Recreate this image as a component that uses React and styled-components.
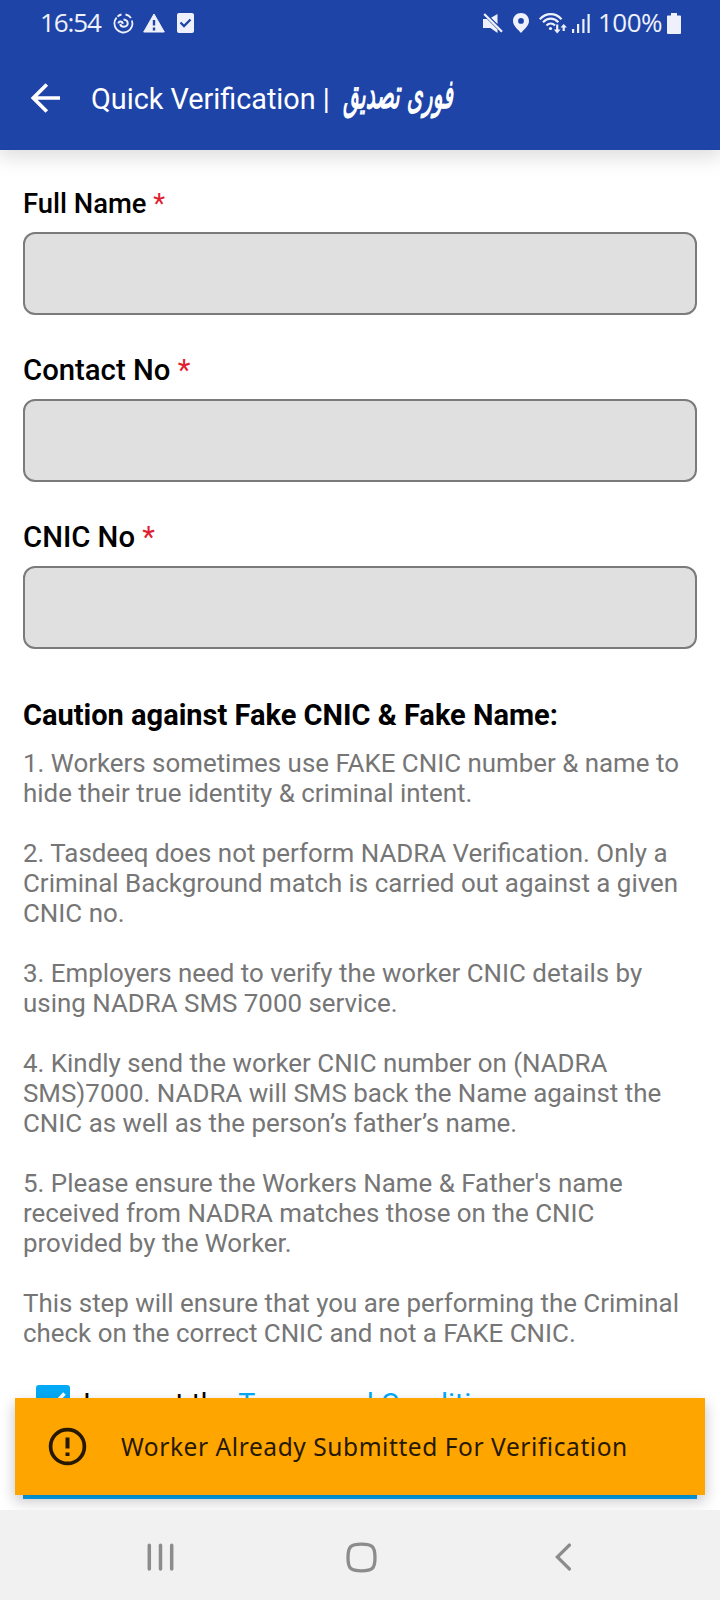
import React from "react";
import styled, { createGlobalStyle } from "styled-components";

const GlobalStyle = createGlobalStyle`
  *, *::before, *::after { box-sizing: border-box; }
  html, body { margin: 0; padding: 0; background: #fff; }
  body { font-family: Roboto, sans-serif; color: #000; }
`;

const Screen = styled.div`
  position: relative;
  width: 720px;
  height: 1600px;
  display: flex;
  flex-direction: column;
  overflow: hidden;
  background: #fff;
`;

const Header = styled.header`
  flex: none;
  height: 150px;
  background: #1e44a8;
  color: #fff;
  z-index: 1;
  box-shadow: 0 4px 20px 2px rgba(0, 0, 0, 0.15);
`;

const StatusBar = styled.div`
  display: flex;
  align-items: center;
  height: 46px;
  padding: 0 39px 0 40px;
  color: #eef1fb;
`;

const Clock = styled.span`
  font: 400 26px/46px "Open Sans", sans-serif;
  width: 73px;
  margin-top: -2px;
  letter-spacing: -1.1px;
  white-space: nowrap;
`;

const Percent = styled.span`
  font: 400 26px/46px "Open Sans", sans-serif;
  width: 69px;
  margin: -2px 0 0 8px;
  letter-spacing: -0.5px;
  white-space: nowrap;
`;

const Glyph = styled.svg`
  display: block;
  flex: none;
  margin-left: ${(p) => p.$gap || 0}px;
`;

const Spacer = styled.div`
  flex: 1;
`;

const TitleBar = styled.div`
  display: flex;
  align-items: center;
  height: 104px;
  padding-left: 29px;
`;

const Title = styled.h1`
  display: flex;
  margin: 1px 0 0 31px;
  font-size: 28.8px;
  line-height: 34px;
  font-weight: 400;
  white-space: pre;
`;

const Urdu = styled.span`
  display: inline-block;
  font: italic 700 ${(p) => p.$size}px/34px "DejaVu Sans", sans-serif;
  transform-origin: ${(p) => p.$origin} center;
  transform: scale(0.6, ${(p) => p.$rise || 1});
  white-space: nowrap;
`;

const UrduTitle = styled(Urdu)`
  margin: -5px 0 0 13px;
`;

const Content = styled.main`
  flex: none;
  height: 1349px;
  padding: 37px 23px 0;
  overflow: hidden;
`;

const Field = styled.div`
  height: 167px;
`;

const Label = styled.label`
  display: block;
  height: 45px;
  font-size: ${(p) => p.$size}px;
  line-height: ${(p) => p.$leading}px;
  font-weight: 500;
`;

const Required = styled.span`
  color: #e0202e;
  font-weight: 400;
`;

const Input = styled.input`
  display: block;
  width: 100%;
  height: 83px;
  border: 2px solid #7b7b7b;
  border-radius: 12px;
  background: #e0e0e0;
  outline: none;
`;

const CautionTitle = styled.h2`
  margin: 10px 0 0;
  font-size: 29px;
  line-height: 34px;
  font-weight: 700;
  white-space: nowrap;
`;

const Notes = styled.div`
  margin-top: 16px;
  color: #767676;
  font-size: 25.9px;
  line-height: 30px;
  white-space: nowrap;
`;

const Note = styled.p`
  margin: 0 0 30px;
`;

const Consent = styled.div`
  display: flex;
  align-items: flex-start;
  margin-top: 37px;
  padding-left: 13px;
  height: 80px;
`;

const ConsentText = styled.span`
  margin: 3px 0 0 13px;
  font-size: 28.7px;
  line-height: 33px;
  white-space: pre;
`;

const Link = styled.a`
  color: #03a9f4;
`;

const Submit = styled.button`
  display: flex;
  align-items: flex-start;
  justify-content: flex-end;
  width: 100%;
  height: 84px;
  border: 0;
  padding: 28px 41px 0;
  background: #03a9f4;
  color: #fff;
`;

const Toast = styled.div`
  position: absolute;
  left: 15px;
  top: 1398px;
  width: 690px;
  height: 97px;
  z-index: 2;
  display: flex;
  align-items: center;
  padding-left: 31px;
  background: #ffa500;
  color: #261900;
  box-shadow: 0 6px 14px rgba(0, 0, 0, 0.24);
`;

const ToastText = styled.span`
  margin: 0 0 0 33px;
  font: 400 24.5px/34px "Noto Sans", sans-serif;
  letter-spacing: 0.57px;
  white-space: nowrap;
`;

const NavBar = styled.nav`
  margin-top: auto;
  height: 90px;
  flex: none;
  z-index: 3;
  display: flex;
  align-items: center;
  padding: 4px 0 0 146px;
  background: #f1f1f1;
`;

const fields = [
  { name: "Full Name", size: 27.4, leading: 35 },
  { name: "Contact No", size: 29.3, leading: 33 },
  { name: "CNIC No", size: 29.3, leading: 33 },
];

const notes = [
  ["1. Workers sometimes use FAKE CNIC number & name to", "hide their true identity & criminal intent."],
  ["2. Tasdeeq does not perform NADRA Verification. Only a", "Criminal Background match is carried out against a given", "CNIC no."],
  ["3. Employers need to verify the worker CNIC details by", "using NADRA SMS 7000 service."],
  ["4. Kindly send the worker CNIC number on (NADRA", "SMS)7000. NADRA will SMS back the Name against the", "CNIC as well as the person’s father’s name."],
  ["5. Please ensure the Workers Name & Father's name", "received from NADRA matches those on the CNIC", "provided by the Worker."],
  ["This step will ensure that you are performing the Criminal", "check on the correct CNIC and not a FAKE CNIC."],
];

function StatusIcons() {
  return (
    <StatusBar>
      <Clock>16:54</Clock>
      <Glyph width="21" height="21" viewBox="0 0 21 21" fill="none" stroke="#eef1fb" strokeWidth="1.8">
        <path d="M8.500 1.500A9 9 0 0 0 4.500 3.600M3.600 4.600A9 9 0 1 0 18.900 7.500M18 5A9 9 0 0 0 12.500 1.500" />
        <path d="M5.500 10.500C5.500 7.800 9.300 7.800 9.800 10.800M10.500 6.500C16 7 16 13.700 11 13.700C8.500 13.700 7.500 12.500 7.200 11" strokeWidth="2" />
      </Glyph>
      <Glyph $gap={9} width="22" height="20" viewBox="0 0 22 20">
        <path d="M11 1L21.3 19H.7Z" fill="#eef1fb" stroke="#eef1fb" strokeLinejoin="round" />
        <path d="M11 7v5.5M11 14.5v3" stroke="#1e44a8" strokeWidth="2.4" />
      </Glyph>
      <Glyph $gap={12} width="17" height="20" viewBox="0 0 17 20">
        <rect width="17" height="20" rx="2" fill="#eef1fb" />
        <path d="M3.5 9.5L7 13L13.5 6.5" fill="none" stroke="#1e44a8" strokeWidth="2.3" />
      </Glyph>
      <Spacer />
      <Glyph width="20" height="21" viewBox="0 0 20 21">
        <path d="M0 6H4L14.500 16.500V20L7.500 15H0ZM14.500 1V11L8 4.800Z" fill="#eef1fb" />
        <path d="M2.500 .5L19.500 17.500" stroke="#1e44a8" strokeWidth="1.200" />
        <path d="M1.200 1L19 18.800" stroke="#eef1fb" strokeWidth="2.300" />
      </Glyph>
      <Glyph $gap={10} width="16" height="20" viewBox="0 0 16 20">
        <path fillRule="evenodd" d="M8 0C3.5 0 0 3.5 0 8C0 12.5 4.5 16 8 20C11.500 16 16 12.5 16 8C16 3.500 12.500 0 8 0ZM8 5A2.900 2.900 0 1 1 8 10.800A2.900 2.900 0 1 1 8 5Z" fill="#eef1fb" />
      </Glyph>
      <Glyph $gap={10} width="28" height="21" viewBox="0 0 28 21" fill="none" stroke="#eef1fb" strokeWidth="2.200">
        <path d="M.8 6.300C7-.5 16.500-.5 22.500 6.300M4 9.300C8.500 4.500 15 4.500 19.300 9.300M7.500 12.500C10 9.800 13.500 9.800 16 12.500" />
        <circle cx="11.500" cy="15.500" r="1.600" fill="#eef1fb" stroke="none" />
        <path d="M18.200 11.500V18M24.700 18V13" />
        <path d="M14.800 16.500H21.600L18.200 20.500ZM21.500 14.500H28L24.700 11Z" fill="#eef1fb" stroke="none" />
      </Glyph>
      <Glyph $gap={5} width="18" height="20" viewBox="0 0 18 20" fill="#eef1fb">
        <path d="M0 16h2.200v4H0ZM5 11h2.200v9H5ZM10.300 6h2.200v14h-2.200ZM15.500 1h2.200v19h-2.200Z" />
      </Glyph>
      <Percent>100%</Percent>
      <Glyph width="14" height="21" viewBox="0 0 14 21" fill="#eef1fb">
        <path d="M4 0H10V2.500H13Q14 2.500 14 3.500V20Q14 21 13 21H1Q0 21 0 20V3.500Q0 2.500 1 2.500H4Z" />
      </Glyph>
    </StatusBar>
  );
}

export default function App() {
  return (
    <>
      <GlobalStyle />
      <Screen>
        <Header>
          <StatusIcons />
          <TitleBar>
            <Glyph width="31" height="30" viewBox="0 0 31 30" fill="none" stroke="#fff" strokeWidth="3.700">
              <path d="M32 15H4.500M17.800 1.500L4.300 15L17.800 28.500" />
            </Glyph>
            <Title>
              Quick Verification |
              <UrduTitle $size={34} $origin="left" $rise={1.2} lang="ur" dir="rtl">
                فوری تصدیق
              </UrduTitle>
            </Title>
          </TitleBar>
        </Header>
        <Content>
          {fields.map((f) => (
            <Field key={f.name}>
              <Label $size={f.size} $leading={f.leading}>
                {f.name} <Required>*</Required>
              </Label>
              <Input aria-label={f.name} />
            </Field>
          ))}
          <CautionTitle>Caution against Fake CNIC &amp; Fake Name:</CautionTitle>
          <Notes>
            {notes.map((lines) => (
              <Note key={lines[0]}>
                {lines.map((line, i) => (
                  <React.Fragment key={line}>
                    {i > 0 && <br />}
                    {line}
                  </React.Fragment>
                ))}
              </Note>
            ))}
          </Notes>
          <Consent>
            <Glyph width="34" height="34" viewBox="0 0 34 34">
              <rect width="34" height="34" rx="3" fill="#03a9f4" />
              <path d="M6 17L13.500 24.500L28.500 8.500" fill="none" stroke="#fff" strokeWidth="3.500" />
            </Glyph>
            <ConsentText>
              I accept the <Link>Terms and Conditions</Link>
            </ConsentText>
          </Consent>
          <Submit>
            <Urdu $size={30} $origin="right" lang="ur" dir="rtl">
              فوری تصدیق
            </Urdu>
          </Submit>
        </Content>
        <Toast>
          <Glyph width="42" height="42" viewBox="0 0 42 42" fill="none" stroke="#261900">
            <circle cx="21.500" cy="20.500" r="16.900" strokeWidth="3.700" />
            <path d="M21.500 11.500V22.500M21.500 26.500V30" strokeWidth="4" />
          </Glyph>
          <ToastText>Worker Already Submitted For Verification</ToastText>
        </Toast>
        <NavBar>
          <Glyph width="29" height="30" viewBox="0 0 29 30" stroke="#8c8c8c" strokeWidth="3.500" strokeLinecap="round">
            <path d="M3.300 3.300V27M14.500 3.300V27M25.700 3.300V27" />
          </Glyph>
          <Glyph $gap={171} width="31" height="31" viewBox="0 0 31 31" fill="none" stroke="#8c8c8c" strokeWidth="3.300">
            <path d="M15.500 2.200C26.500 2.200 29 4.500 29 15.500C29 26.500 26.500 28.800 15.500 28.800C4.500 28.800 2 26.500 2 15.500C2 4.500 4.500 2.200 15.500 2.200Z" />
          </Glyph>
          <Glyph $gap={177} width="18" height="30" viewBox="0 0 18 30" fill="none" stroke="#8c8c8c" strokeWidth="3.200" strokeLinecap="round">
            <path d="M15.500 3L3.300 15L15.500 27" />
          </Glyph>
        </NavBar>
      </Screen>
    </>
  );
}
